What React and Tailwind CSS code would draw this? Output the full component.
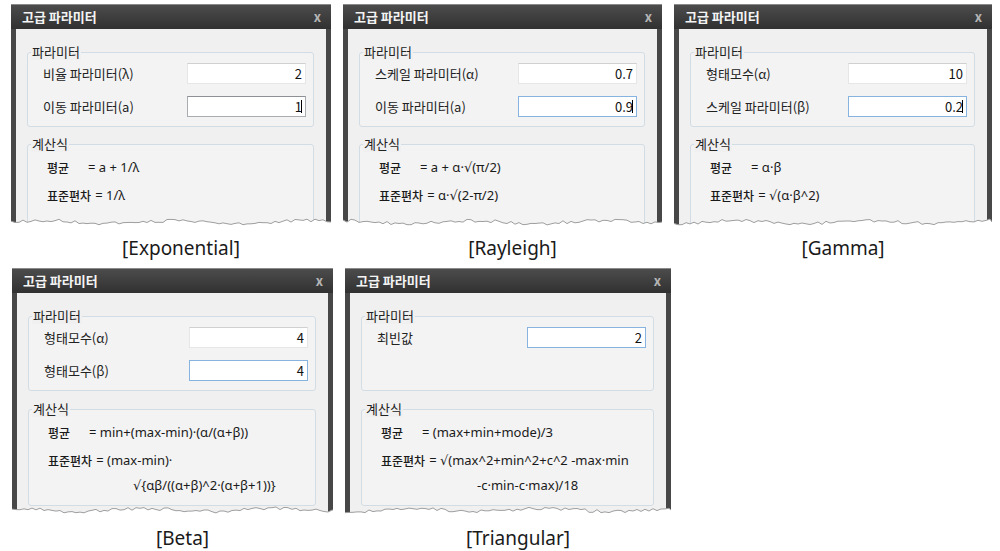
import React from 'react'

const tearLine = (w, seed) => {
  let s = seed * 7919 + 13
  const rnd = () => {
    s = (s * 16807) % 2147483647
    return s / 2147483647
  }
  const pts = []
  for (let x = 0; x < w; x += 4) {
    const y = 6 + Math.sin(x / 21 + seed) * 1.5 + (rnd() - 0.5) * 3.2
    pts.push(`${x},${y.toFixed(1)}`)
  }
  pts.push(`${w},6`)
  return 'M' + pts.join(' L')
}

const Tear = ({ w, seed }) => {
  const line = tearLine(w, seed)
  return (
    <svg className="absolute bottom-0 left-0" width={w} height={12} viewBox={`0 0 ${w} 12`}>
      <path d={`${line} L${w},12 L0,12 Z`} fill="#fff" />
      <path d={line} fill="none" stroke="#9e9e9e" strokeWidth="1" />
    </svg>
  )
}

const Group = ({ title, className, children }) => (
  <div className={`relative rounded-[3px] border border-[#d2dce4] bg-[#f3f3f3] ${className}`}>
    <span className="absolute left-[3px] top-[-10px] bg-[#f0f0f0] px-[1px] text-[13px] leading-[17px] text-[#222]">
      {title}
    </span>
    {children}
  </div>
)

const Field = ({ label, value, focus, caret }) => {
  const border =
    focus === 'blue'
      ? 'border-[#86b3e0]'
      : focus === 'gray'
      ? 'border-[#a9adb2] border-t-[#8d9196]'
      : 'border-[#e6e6e6] border-t-[#d0d0d0]'
  return (
    <div className="flex h-[21px] items-center justify-between">
      <span className="text-[13px] text-[#222]">{label}</span>
      <div className={`flex h-[21px] w-[119px] items-center justify-end border bg-white pr-[3px] text-[13px] text-[#111] ${border}`}>
        <span>{value}</span>
        {caret && <span className="-ml-[1px] inline-block h-[13px] w-px bg-black" />}
      </div>
    </div>
  )
}

const Formula = ({ label, text, indent }) => (
  <div className="flex h-[20px] items-center text-[12px] text-[#1a1a1a]">
    {label === '평균' && <span className="inline-block w-[41px] font-medium">{label}</span>}
    {label === '표준편차' && <span className="mr-[4px] font-medium">{label}</span>}
    <span className={`font-['Noto_Sans','DejaVu_Sans','Noto_Sans_CJK_KR',sans-serif] text-[13px] ${indent || ''}`}>{text}</span>
  </div>
)

const Dialog = ({ d }) => (
  <div className="flex flex-col">
    <div className={`relative flex flex-col overflow-hidden ${d.size}`}>
      <div className="flex h-[25px] shrink-0 items-center justify-between border-t border-[#8a8a8a] bg-linear-to-b from-[#4c4c4c] to-[#313131] pl-[11px] pr-[10px]">
        <span className="text-[13px] font-bold text-[#f4f4f4]">고급 파라미터</span>
        <span className="text-[13px] font-bold text-[#b5b5b5]">x</span>
      </div>
      <div className="flex flex-1 flex-col border-x-[5px] border-[#474747] bg-[#f0f0f0] pl-[11px] pr-[12px] pt-[23px]">
        <Group title="파라미터" className="h-[75px] shrink-0 pl-[15px] pr-[7px] pt-[10px]">
          <div className="flex flex-col gap-[12px]">
            {d.rows.map((r) => (
              <Field key={r.label} {...r} />
            ))}
          </div>
        </Group>
        <Group title="계산식" className={`pl-[19px] pt-[13px] ${d.box}`}>
          <div className="flex flex-col">
            {d.formulas.map((f, i) => (
              <div key={i} className={i === 0 ? '' : i === 1 ? 'mt-[8px]' : 'mt-[5px]'}>
                <Formula {...f} />
              </div>
            ))}
          </div>
        </Group>
      </div>
      <Tear w={d.w} seed={d.seed} />
    </div>
    <div className={`pl-[20px] text-center font-['Noto_Sans','Open_Sans',sans-serif] text-[19px] leading-[26px] text-[#1a1a1a] ${d.capGap}`}>
      {d.caption}
    </div>
  </div>
)

const top = [
  {
    w: 320,
    seed: 3,
    size: 'w-[320px] h-[224px]',
    box: 'flex-1 mt-[17px]',
    capGap: 'mt-[7px]',
    caption: '[Exponential]',
    rows: [
      { label: '비율 파라미터(λ)', value: '2' },
      { label: '이동 파라미터(a)', value: '1', focus: 'gray', caret: true },
    ],
    formulas: [
      { label: '평균', text: '= a + 1/λ' },
      { label: '표준편차', text: '= 1/λ' },
    ],
  },
  {
    w: 319,
    seed: 5,
    size: 'w-[319px] h-[224px]',
    box: 'flex-1 mt-[17px]',
    capGap: 'mt-[7px]',
    caption: '[Rayleigh]',
    rows: [
      { label: '스케일 파라미터(α)', value: '0.7' },
      { label: '이동 파라미터(a)', value: '0.9', focus: 'blue', caret: true },
    ],
    formulas: [
      { label: '평균', text: '= a + α·√(π/2)' },
      { label: '표준편차', text: '= α·√(2-π/2)' },
    ],
  },
  {
    w: 318,
    seed: 8,
    size: 'w-[318px] h-[224px]',
    box: 'flex-1 mt-[17px]',
    capGap: 'mt-[7px]',
    caption: '[Gamma]',
    rows: [
      { label: '형태모수(α)', value: '10' },
      { label: '스케일 파라미터(β)', value: '0.2', focus: 'blue', caret: true },
    ],
    formulas: [
      { label: '평균', text: '= α·β' },
      { label: '표준편차', text: '= √(α·β^2)' },
    ],
  },
]

const bottom = [
  {
    w: 321,
    seed: 11,
    size: 'w-[321px] h-[248px]',
    box: 'h-[97px] mt-[18px] shrink-0',
    capGap: 'mt-[9px]',
    caption: '[Beta]',
    rows: [
      { label: '형태모수(α)', value: '4' },
      { label: '형태모수(β)', value: '4', focus: 'blue' },
    ],
    formulas: [
      { label: '평균', text: '= min+(max-min)·(α/(α+β))' },
      { label: '표준편차', text: '= (max-min)·' },
      { text: '√{αβ/((α+β)^2·(α+β+1))}', indent: 'ml-[85px]' },
    ],
  },
  {
    w: 326,
    seed: 14,
    size: 'w-[326px] h-[248px]',
    box: 'h-[97px] mt-[18px] shrink-0',
    capGap: 'mt-[9px]',
    caption: '[Triangular]',
    rows: [{ label: '최빈값', value: '2', focus: 'blue' }],
    formulas: [
      { label: '평균', text: '= (max+min+mode)/3' },
      { label: '표준편차', text: '= √(max^2+min^2+c^2 -max·min' },
      { text: '-c·min-c·max)/18', indent: 'ml-[96px]' },
    ],
  },
]

export default function App() {
  return (
    <div className="h-[551px] w-[1000px] overflow-hidden bg-white pt-[4px] font-['Noto_Sans_CJK_KR',sans-serif]">
      <div className="flex gap-[12px] pl-[11px]">
        {top.map((d) => (
          <Dialog key={d.caption} d={d} />
        ))}
      </div>
      <div className="mt-[7px] flex gap-[12px] pl-[12px]">
        {bottom.map((d) => (
          <Dialog key={d.caption} d={d} />
        ))}
      </div>
    </div>
  )
}
